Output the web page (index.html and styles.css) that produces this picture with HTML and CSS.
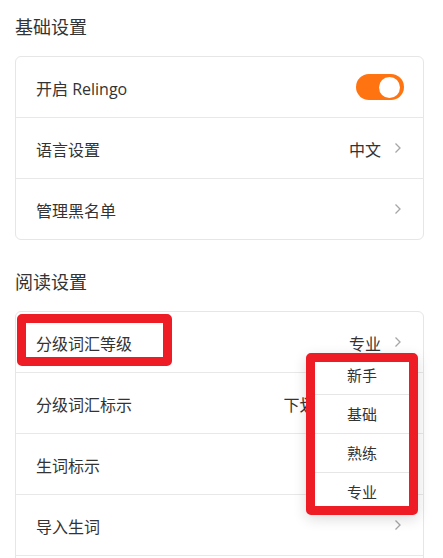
FILE: index.html
```html
<!DOCTYPE html>
<html lang="zh-CN">
<head>
<meta charset="utf-8">
<title>设置</title>
<link rel="stylesheet" href="styles.css">
</head>
<body>
<div class="page">
  <section class="section">
    <h2 class="section-title">基础设置</h2>
    <div class="card">
      <div class="row">
        <span class="label">开启 Relingo</span>
        <span class="switch"><span class="knob"></span></span>
      </div>
      <div class="row">
        <span class="label">语言设置</span>
        <span class="value">中文</span>
        <svg class="chev" viewBox="0 0 8 12" width="8" height="12"><path d="M1.5 1.5 L6 6 L1.5 10.5" fill="none" stroke="#a6a6a6" stroke-width="1.3"/></svg>
      </div>
      <div class="row">
        <span class="label">管理黑名单</span>
        <svg class="chev" viewBox="0 0 8 12" width="8" height="12"><path d="M1.5 1.5 L6 6 L1.5 10.5" fill="none" stroke="#a6a6a6" stroke-width="1.3"/></svg>
      </div>
    </div>
  </section>

  <section class="section section-second">
    <h2 class="section-title">阅读设置</h2>
    <div class="card card-open">
      <div class="row">
        <span class="label">分级词汇等级</span>
        <span class="value">专业</span>
        <svg class="chev" viewBox="0 0 8 12" width="8" height="12"><path d="M1.5 1.5 L6 6 L1.5 10.5" fill="none" stroke="#a6a6a6" stroke-width="1.3"/></svg>
        <span class="highlight"></span>
      </div>
      <div class="row">
        <span class="label">分级词汇标示</span>
        <span class="value">下划线 + 颜色</span>
        <svg class="chev" viewBox="0 0 8 12" width="8" height="12"><path d="M1.5 1.5 L6 6 L1.5 10.5" fill="none" stroke="#a6a6a6" stroke-width="1.3"/></svg>
      </div>
      <div class="row">
        <span class="label">生词标示</span>
        <span class="switch"><span class="knob"></span></span>
      </div>
      <div class="row">
        <span class="label">导入生词</span>
        <svg class="chev" viewBox="0 0 8 12" width="8" height="12"><path d="M1.5 1.5 L6 6 L1.5 10.5" fill="none" stroke="#a6a6a6" stroke-width="1.3"/></svg>
      </div>
      <div class="row"></div>

      <div class="menu">
        <ul class="menu-list">
          <li class="menu-item">新手</li>
          <li class="menu-item">基础</li>
          <li class="menu-item">熟练</li>
          <li class="menu-item">专业</li>
        </ul>
      </div>
    </div>
  </section>
</div>
</body>
</html>
```

FILE: styles.css
```css
html, body {
  margin: 0;
  padding: 0;
  background: #ffffff;
  overflow: hidden;
}

body {
  font-family: "Open Sans", "Noto Sans CJK SC", sans-serif;
  color: #333333;
}

.page {
  width: 409px;
  padding: 15px 0 0 15px;
}

.section-second {
  margin-top: 30px;
}

.section-title {
  margin: 0 0 17px 0;
  font-size: 18px;
  font-weight: 400;
  line-height: 24px;
  height: 24px;
  color: #333333;
}

.card {
  position: relative;
  border: 1px solid #e6e6e6;
  border-radius: 6px;
  background: #ffffff;
}

.row {
  position: relative;
  display: flex;
  align-items: center;
  height: 60px;
  padding: 0 19px 0 20px;
  border-bottom: 1px solid #e8e8e8;
  font-size: 16px;
}

.row:last-child {
  border-bottom: none;
}

.label {
  flex: 1;
  padding-top: 1px;
  white-space: nowrap;
}

.value {
  padding-top: 1px;
  margin-right: 13px;
  white-space: nowrap;
}

.chev {
  display: block;
  margin-right: 2px;
}

.switch {
  position: relative;
  display: block;
  width: 48px;
  height: 26px;
  border-radius: 13px;
  background: #ff7410;
}

.knob {
  position: absolute;
  top: 2.5px;
  right: 4px;
  width: 21px;
  height: 21px;
  border-radius: 50%;
  background: #ffffff;
}

.highlight {
  position: absolute;
  left: 1px;
  top: 2px;
  width: 137px;
  height: 34px;
  border: 9px solid #ee1c25;
  border-radius: 5px;
}

.menu {
  position: absolute;
  left: 290px;
  top: 41px;
  width: 94px;
  height: 144px;
  border: 9px solid #ee1c25;
  border-radius: 5px;
  background: #ffffff;
  overflow: hidden;
  box-shadow: 0 4px 14px rgba(0, 0, 0, 0.14);
}

.menu-list {
  list-style: none;
  margin: -6px 0 0 0;
  padding: 0;
}

.menu-item {
  height: 38px;
  line-height: 38px;
  text-align: center;
  font-size: 15px;
  color: #333333;
  border-bottom: 1px solid #e6e6e6;
}

.menu-item:last-child {
  border-bottom: none;
}
```
